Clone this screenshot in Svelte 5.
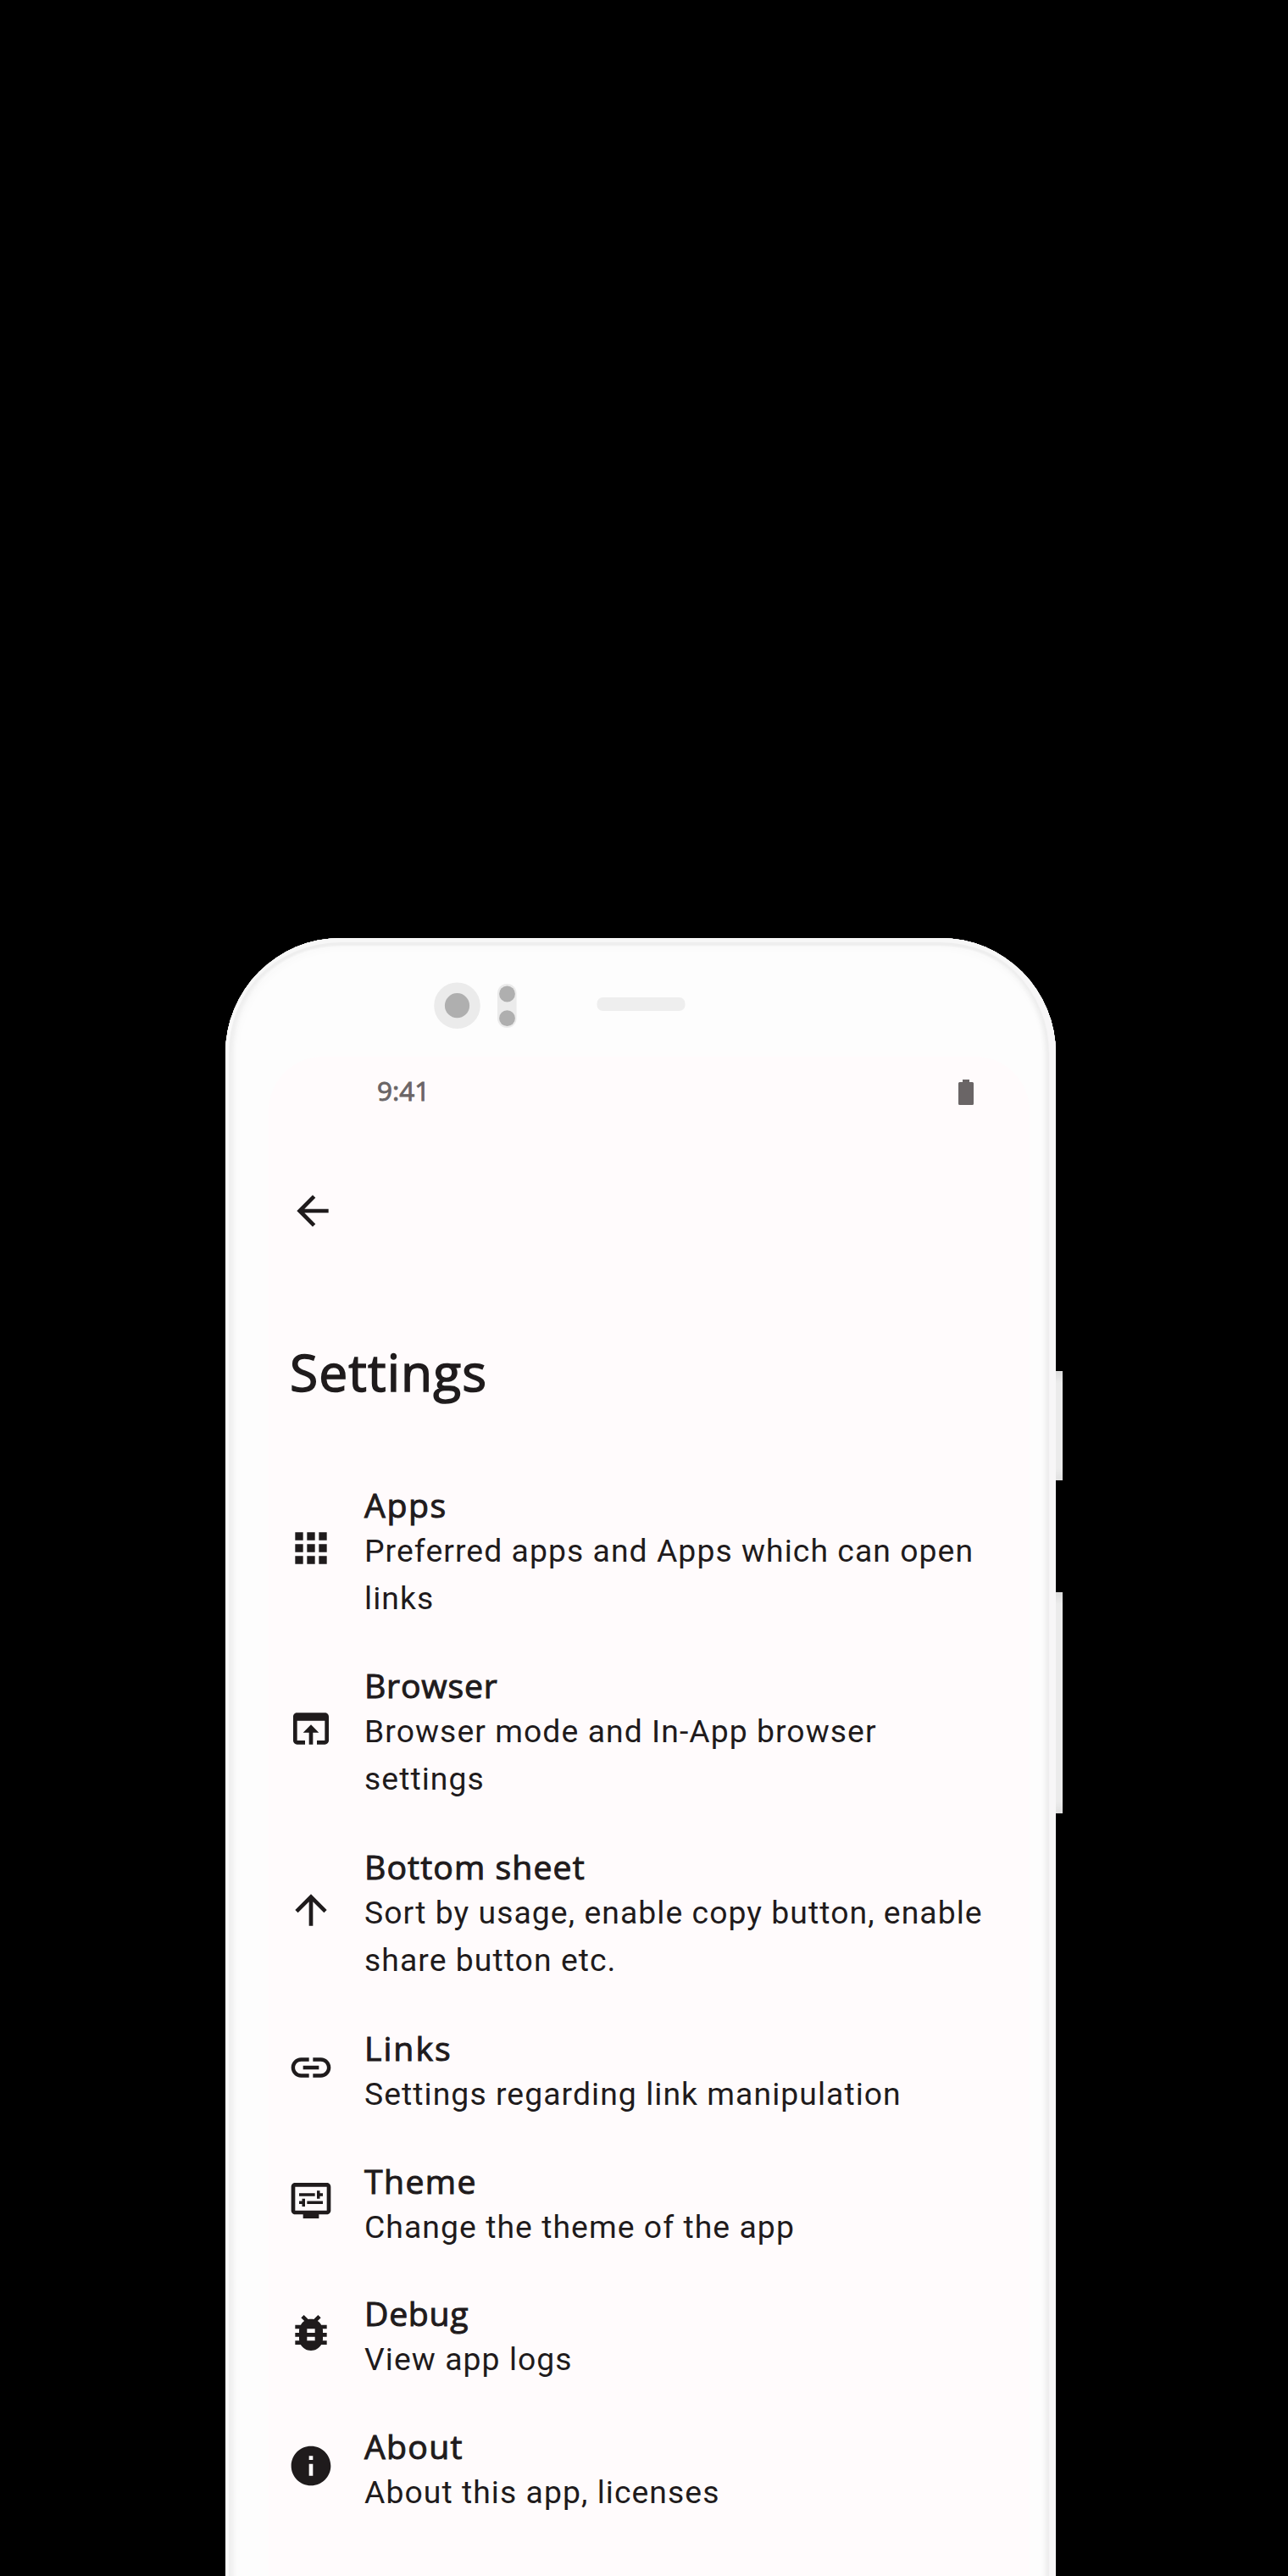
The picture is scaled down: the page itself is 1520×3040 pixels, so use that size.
<script>
  const items = [
    {
      title: 'Apps', tracking: 1.6,
      lines: ['Preferred apps and Apps which can open', 'links'],
      icon: 'M4 8h4V4H4v4zm6 12h4v-4h-4v4zm-6 0h4v-4H4v4zm0-6h4v-4H4v4zm6 0h4v-4h-4v4zm6-10v4h4V4h-4zm-6 4h4V4h-4v4zm6 6h4v-4h-4v4zm0 6h4v-4h-4v4z'
    },
    {
      title: 'Browser', tracking: 0.8,
      lines: ['Browser mode and In-App browser', 'settings'],
      icon: 'M19 4H5c-1.11 0-2 .9-2 2v12c0 1.1.89 2 2 2h4v-2H5V8h14v10h-4v2h4c1.1 0 2-.9 2-2V6c0-1.1-.89-2-2-2zm-7 6l-4 4h3v6h2v-6h3l-4-4z'
    },
    {
      title: 'Bottom sheet', tracking: 1.1,
      lines: ['Sort by usage, enable copy button, enable', 'share button etc.'],
      icon: 'M4 12l1.41 1.41L11 7.83V20h2V7.83l5.58 5.59L20 12l-8-8-8 8z'
    },
    {
      title: 'Links', tracking: 2,
      lines: ['Settings regarding link manipulation'],
      icon: 'M3.9 12c0-1.71 1.39-3.1 3.1-3.1h4V7H7c-2.76 0-5 2.24-5 5s2.24 5 5 5h4v-1.9H7c-1.71 0-3.1-1.39-3.1-3.1zM8 13h8v-2H8v2zm9-6h-4v1.9h4c1.71 0 3.1 1.39 3.1 3.1s-1.39 3.1-3.1 3.1h-4V17h4c2.76 0 5-2.24 5-5s-2.24-5-5-5z'
    },
    {
      title: 'Theme', tracking: 1.4,
      lines: ['Change the theme of the app'],
      icon: 'M20 3H4c-1.1 0-2 .9-2 2v12c0 1.1.9 2 2 2h4v2h8v-2h4c1.1 0 2-.9 2-2V5c0-1.1-.9-2-2-2zm0 14H4V5h16v12zM6 8.25h8v1.5H6zM15 7h1.5v1.25H18v1.5h-1.5V11H15zM10 12.25h8v1.5h-8zM7.5 11H9v4H7.5v-1.25H6v-1.5h1.5z'
    },
    {
      title: 'Debug', tracking: 0.7,
      lines: ['View app logs'],
      icon: 'M20 8h-2.81c-.45-.78-1.07-1.45-1.82-1.96L17 4.41 15.59 3l-2.17 2.17C12.96 5.06 12.49 5 12 5c-.49 0-.96.06-1.41.17L8.41 3 7 4.41l1.62 1.63C7.88 6.55 7.26 7.22 6.81 8H4v2h2.09c-.05.33-.09.66-.09 1v1H4v2h2v1c0 .34.04.67.09 1H4v2h2.81c1.04 1.79 2.97 3 5.19 3s4.15-1.21 5.19-3H20v-2h-2.09c.05-.33.09-.66.09-1v-1h2v-2h-2v-1c0-.34-.04-.67-.09-1H20V8zm-6 8h-4v-2h4v2zm0-4h-4v-2h4v2z'
    },
    {
      title: 'About', tracking: 1.3,
      lines: ['About this app, licenses'],
      icon: 'M12 2C6.48 2 2 6.48 2 12s4.48 10 10 10 10-4.48 10-10S17.52 2 12 2zm1 15h-2v-6h2v6zm0-8h-2V7h2v2z'
    }
  ];
</script>

<main class="stage">
  <div class="device">
    <div class="phone">
      <svg class="hardware" viewBox="0 0 980 140" aria-hidden="true">
        <circle cx="273.5" cy="79.7" r="27.3" fill="#ebebeb" />
        <circle cx="273.5" cy="79.7" r="14.6" fill="#afafaf" />
        <rect x="321" y="54" width="22.6" height="52" rx="11.3" fill="#ebebeb" />
        <circle cx="332.5" cy="66" r="9.4" fill="#afafaf" />
        <circle cx="332.5" cy="94.7" r="9.4" fill="#afafaf" />
        <rect x="438.5" y="70" width="104" height="16" rx="7" fill="#eee" />
      </svg>
      <div class="screen">
        <div class="status">
          <span class="clock">9:41</span>
          <svg class="battery" viewBox="0 0 18 30" aria-hidden="true">
            <path d="M5 0h8v3h3.5a1.5 1.5 0 0 1 1.5 1.5v24a1.5 1.5 0 0 1-1.5 1.5h-15A1.5 1.5 0 0 1 0 28.5v-24A1.5 1.5 0 0 1 1.5 3H5z" />
          </svg>
        </div>
        <svg class="icon back" viewBox="0 0 24 24" aria-hidden="true">
          <path d="M20 11H7.83l5.59-5.59L12 4l-8 8 8 8 1.41-1.41L7.83 13H20v-2z" />
        </svg>
        <h1>Settings</h1>
        <ul>
          {#each items as item}
            <li class:compact={item.lines.length === 1}>
              <svg class="icon" viewBox="0 0 24 24" aria-hidden="true"><path fill-rule="evenodd" d={item.icon} /></svg>
              <div class="text">
                <h2 style="letter-spacing: {item.tracking}px">{item.title}</h2>
                {#each item.lines as line}
                  <p>{line}</p>
                {/each}
              </div>
            </li>
          {/each}
        </ul>
      </div>
    </div>
    <div class="keys">
      <div class="key power"></div>
      <div class="key volume"></div>
    </div>
  </div>
</main>

<style>
  :global(body) {
    background: #000;
  }
  .stage {
    box-sizing: border-box;
    width: 1520px;
    height: 3040px;
    padding: 1107px 0 0 266px;
    background: #000;
    overflow: hidden;
  }
  .device {
    display: flex;
    height: 1980px;
  }
  .phone {
    box-sizing: border-box;
    width: 980px;
    flex: none;
    border-radius: 136px 136px 0 0;
    background: #fdfdfd;
    box-shadow:
      inset 0 6px 0 -1px #f7f7f7,
      inset 4px 0 1px #fafafa,
      inset -8px 0 1px #f7f6f7,
      inset 0 9px 2px #eee,
      inset 9px 0 4px #efefef,
      inset -12px 0 5px #ececec,
      inset 0 0 14px 8px #f6f6f6;
  }
  .hardware {
    display: block;
    width: 980px;
    height: 140px;
  }
  .screen {
    box-sizing: border-box;
    width: 898px;
    height: 1840px;
    margin-left: 51px;
    padding-left: 22px;
    border-radius: 64px 64px 0 0;
    background: #fffbfc;
    color: #1f1b1c;
  }
  .status {
    display: flex;
    justify-content: space-between;
    padding: 24px 66px 0 106px;
    height: 130px;
    fill: #6a6566;
    color: #6a6566;
  }
  .clock {
    font: 400 31.5px/32px 'Open Sans', sans-serif;
    -webkit-text-stroke: 0.9px #6a6566;
  }
  .battery {
    width: 18px;
    height: 30px;
    margin-top: 3px;
  }
  .icon {
    display: block;
    flex: none;
    width: 56px;
    height: 56px;
    fill: #1f1b1c;
  }
  .back {
    margin-left: 2px;
  }
  h1,
  h2,
  p,
  ul {
    margin: 0;
    padding: 0;
    font-weight: 400;
  }
  h1 {
    padding-top: 120px;
    height: 142px;
    margin-left: 3px;
    font: 400 60.5px/84px 'Open Sans', sans-serif;
    letter-spacing: 1.1px;
    -webkit-text-stroke: 1.5px #1f1b1c;
  }
  ul {
    padding-top: 0.6px;
    list-style: none;
  }
  li {
    display: flex;
    align-items: center;
    gap: 35px;
    padding: 20px 0 19.9px;
  }
  li.compact {
    padding: 19.5px 0 19.3px;
  }
  h2 {
    padding-top: 10px;
    font: 400 39.2px/52px 'Open Sans', sans-serif;
    -webkit-text-stroke: 1px #1f1b1c;
    white-space: nowrap;
  }
  p {
    font: 400 37.33px/56px Roboto, sans-serif;
    letter-spacing: 1.05px;
    white-space: nowrap;
  }
  .keys {
    padding-top: 511px;
  }
  .key {
    width: 8px;
    background: linear-gradient(#dcdcdc, #ebebeb 14px, #ebebeb calc(100% - 14px), #e0e0e0);
  }
  .power {
    height: 129px;
  }
  .volume {
    height: 261px;
    margin-top: 132px;
  }
</style>
